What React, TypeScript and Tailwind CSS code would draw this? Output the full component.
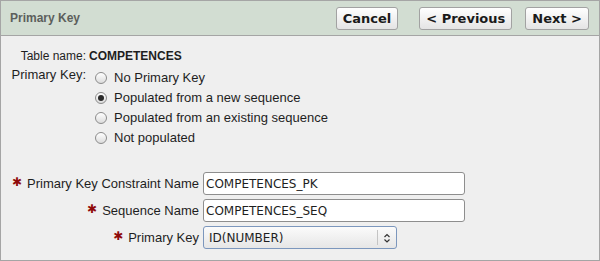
import type { ReactNode } from "react";

function Btn({ children, className = "" }: { children: ReactNode; className?: string }) {
  return (
    <button
      type="button"
      className={`h-[23px] rounded-[3px] border border-[#a2a2a2] bg-gradient-to-b from-[#ffffff] to-[#e4e4e4] px-[6px] font-['DejaVu_Sans',sans-serif] text-[13px] font-bold leading-none text-[#1a1a1a] ${className}`}
    >
      {children}
    </button>
  );
}

function Radio({ checked }: { checked?: boolean }) {
  return (
    <span className="flex h-[12px] w-[12px] shrink-0 items-center justify-center rounded-full border border-[#8c8c8c] bg-gradient-to-b from-[#ffffff] to-[#dcdcdc]">
      {checked && <span className="h-[6px] w-[6px] rounded-full bg-[#2a2a2a]" />}
    </span>
  );
}

function Req() {
  return (
    <span className="relative -top-[2px] mr-[5px] font-['DejaVu_Sans',sans-serif] text-[12px] font-bold text-[#8f0a0a]">
      ✱
    </span>
  );
}

const options = [
  { label: "No Primary Key" },
  { label: "Populated from a new sequence", checked: true },
  { label: "Populated from an existing sequence" },
  { label: "Not populated" },
];

const fields = [
  { label: "Primary Key Constraint Name", value: "COMPETENCES_PK" },
  { label: "Sequence Name", value: "COMPETENCES_SEQ" },
];

export default function App() {
  return (
    <div className="flex h-[261px] w-[600px] flex-col border border-[#a5a5a5] bg-[#efefef] font-['Liberation_Sans',Arial,sans-serif] text-[#1e1e1e]">
      <div className="flex h-[35px] shrink-0 items-center border-b border-[#a5a5a5] bg-[#d2ddd2] pl-[9px] pr-[10px]">
        <span className="text-[12px] font-bold text-[#5c5f5c]">Primary Key</span>
        <div className="ml-auto flex items-center">
          <Btn className="mr-[21px]">Cancel</Btn>
          <Btn className="mr-[13px]">&lt; Previous</Btn>
          <Btn>Next &gt;</Btn>
        </div>
      </div>

      <div className="flex flex-col pt-[11px]">
        <div className="flex h-[18px] items-center">
          <span className="w-[85px] text-right text-[12px]">Table name:</span>
          <span className="ml-[3px] text-[12px] font-bold">COMPETENCES</span>
        </div>

        <div className="mt-[3px] flex">
          <span className="w-[85px] pt-[1px] text-right text-[13px] leading-[12px]">Primary Key:</span>
          <div className="ml-[9px] flex flex-col">
            {options.map((o) => (
              <label key={o.label} className="flex h-[20px] items-center">
                <Radio checked={o.checked} />
                <span className="ml-[7px] text-[13px]">{o.label}</span>
              </label>
            ))}
          </div>
        </div>

        <div className="mt-[24px] flex flex-col gap-[4px]">
          {fields.map((f) => (
            <div key={f.label} className="flex h-[23px] items-center">
              <span className="w-[198px] text-right text-[13px]">
                <Req />
                {f.label}
              </span>
              <input
                readOnly
                value={f.value}
                className="ml-[4px] h-[23px] w-[262px] rounded-[3px] border border-[#8e8e8e] bg-white px-[2px] font-['DejaVu_Sans',sans-serif] text-[12px] text-[#1e1e1e] outline-none"
              />
            </div>
          ))}
          <div className="flex h-[23px] items-center">
            <span className="w-[198px] text-right text-[13px]">
              <Req />
              Primary Key
            </span>
            <div className="ml-[4px] flex h-[23px] w-[194px] items-center rounded-[3px] border border-[#7c97bd] bg-gradient-to-b from-[#fbfbfb] to-[#e6e6e6]">
              <span className="flex-1 pl-[5px] font-['DejaVu_Sans',sans-serif] text-[12px]">ID(NUMBER)</span>
              <span className="h-[15px] w-px bg-[#c4c4c4]" />
              <svg width="18" height="12" viewBox="0 0 18 12" className="shrink-0">
                <path d="M6.5 5 L9 2.5 L11.5 5" fill="none" stroke="#333" strokeWidth="1.2" />
                <path d="M6.5 7.5 L9 10 L11.5 7.5" fill="none" stroke="#333" strokeWidth="1.2" />
              </svg>
            </div>
          </div>
        </div>
      </div>
    </div>
  );
}
